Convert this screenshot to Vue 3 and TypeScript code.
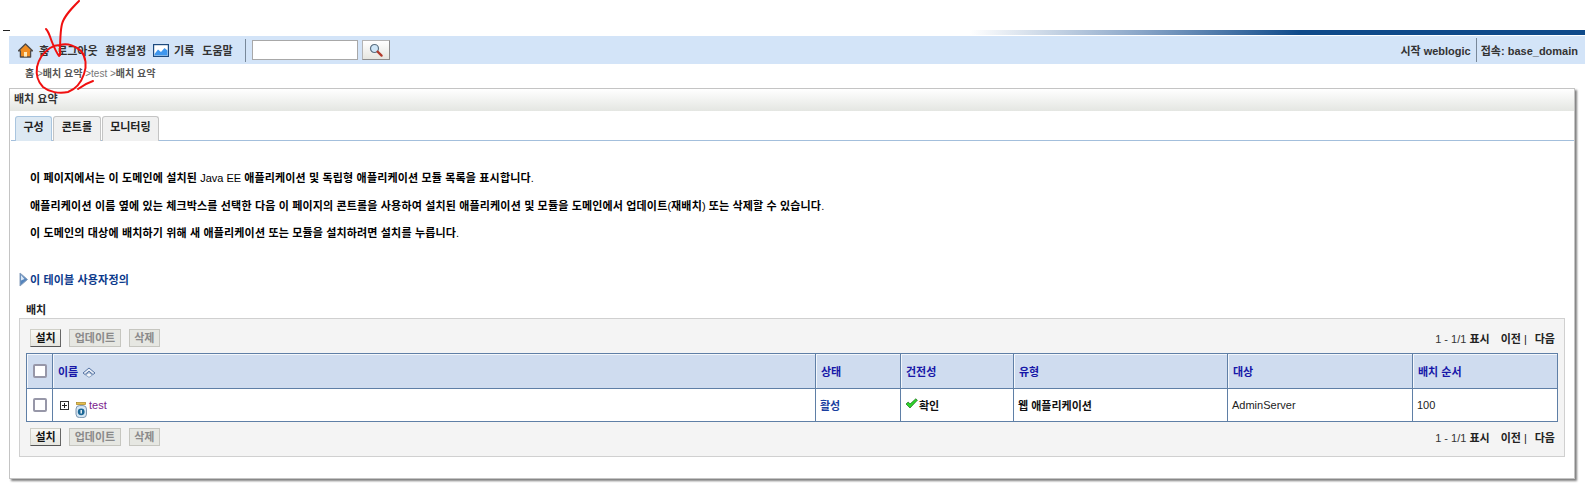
<script setup lang="ts">
const cols = [
  { w: 26, label: '' },
  { w: 763, label: '이름' },
  { w: 85, label: '상태' },
  { w: 113, label: '건전성' },
  { w: 214, label: '유형' },
  { w: 185, label: '대상' },
  { w: 145, label: '배치 순서' },
]
const tabs = ['구성', '콘트롤', '모니터링']
const toolbars = ['top', 'bottom']
</script>

<template>
  <div class="page">
    <div class="topband">
      <div class="dash"></div>
      <div class="gradbar"></div>
    </div>

    <nav class="nav">
      <svg class="ico home" width="15" height="15" viewBox="0 0 15 15">
        <path d="M7.5 1 L14.5 7.8 L12.6 7.8 L12.6 14 L2.4 14 L2.4 7.8 L0.5 7.8 Z" fill="#f08c20" stroke="#4e4a48" stroke-width="1.3" stroke-linejoin="round" />
        <rect x="6" y="9" width="3" height="4.6" fill="#ffe9b8" />
      </svg>
      <span class="nl n1">홈</span>
      <span class="nl n2">로그아웃</span>
      <span class="nl n3">환경설정</span>
      <svg class="ico chart" width="16" height="13" viewBox="0 0 16 13">
        <rect x=".6" y=".6" width="14.8" height="11.8" fill="#fff" stroke="#1d4a7e" stroke-width="1.2" />
        <path d="M1.5 10 L5 5.5 L8 8 L11.5 4 L14.5 6.5 L14.5 11.5 L1.5 11.5 Z" fill="#3f97ee" />
      </svg>
      <span class="nl n4">기록</span>
      <span class="nl n5">도움말</span>
      <span class="vsep"></span>
      <input class="search" type="text" />
      <button class="searchbtn" type="button" aria-label="검색">
        <svg width="14" height="14" viewBox="0 0 14 14">
          <circle cx="5.5" cy="5.5" r="4" fill="#cfe6f7" stroke="#5b6f80" stroke-width="1.2" />
          <path d="M8.6 8.6 L12.6 12.6" stroke="#b23a2a" stroke-width="2.2" stroke-linecap="round" />
        </svg>
      </button>
      <div class="navright">
        <span class="nr">시작 weblogic</span>
        <span class="rsep"></span>
        <span class="nr">접속: base_domain</span>
      </div>
    </nav>

    <div class="crumbs">
      <b>홈</b> <i>&gt;</i><b>배치 요약</b> <i>&gt;test &gt;</i><b>배치 요약</b>
    </div>

    <section class="panel">
      <h2 class="phead">배치 요약</h2>
      <div class="tabs">
        <div v-for="(t, i) in tabs" :key="t" class="tab" :class="{ on: i === 0 }">{{ t }}</div>
      </div>

      <div class="intro">
        <p><b>이 페이지에서는 이 도메인에 설치된</b> Java EE <b>애플리케이션 및 독립형 애플리케이션 모듈 목록을 표시합니다</b>.</p>
        <p><b>애플리케이션 이름 옆에 있는 체크박스를 선택한 다음 이 페이지의 콘트롤을 사용하여 설치된 애플리케이션 및 모듈을 도메인에서 업데이트</b>(<b>재배치</b>) <b>또는 삭제할 수 있습니다</b>.</p>
        <p><b>이 도메인의 대상에 배치하기 위해 새 애플리케이션 또는 모듈을 설치하려면 설치를 누릅니다</b>.</p>
      </div>

      <div class="customize">
        <svg width="9" height="15" viewBox="0 0 9 15">
          <path d="M1 1 L8.5 7.5 L1 14 Z" fill="#5585bd" stroke="#8aa0bc" stroke-width="1" stroke-linejoin="round" />
          <path d="M2 3 L5.5 7 L2 8.5 Z" fill="#dbe8f6" />
        </svg>
        <span>이 테이블 사용자정의</span>
      </div>

      <div class="caption">배치</div>

      <div class="box">
        <template v-for="(pos, idx) in toolbars" :key="pos">
          <div class="toolbar" :class="pos">
            <button class="btn" type="button">설치</button>
            <button class="btn off" type="button">업데이트</button>
            <button class="btn off" type="button">삭제</button>
            <div class="pager">
              <span class="count">1 - 1/1</span> <b>표시</b>
              <b class="prev">이전</b><span class="bar">|</span><b class="next">다음</b>
            </div>
          </div>

          <table v-if="idx === 0" class="grid">
            <colgroup>
              <col v-for="c in cols" :key="c.label" :style="{ width: c.w + 'px' }" />
            </colgroup>
            <thead>
              <tr>
                <th class="chk"><span class="cb"></span></th>
                <th>
                  이름
                  <svg class="sort" width="14" height="11" viewBox="0 0 14 11">
                    <path d="M1 6 L7 1 L13 6 L11 7.5 L7 4.2 L3 7.5 Z" fill="#e8eef7" stroke="#47689a" stroke-width=".9" stroke-linejoin="round" />
                    <path d="M3.5 8 L7 5.6 L10.5 8 L7 10.4 Z" fill="#f4f7fb" stroke="#6f8cb4" stroke-width=".8" stroke-linejoin="round" />
                  </svg>
                </th>
                <th v-for="c in cols.slice(2)" :key="c.label">{{ c.label }}</th>
              </tr>
            </thead>
            <tbody>
              <tr>
                <td class="chk"><span class="cb"></span></td>
                <td class="namecell">
                  <div class="nameinner">
                    <span class="plus"></span>
                    <svg class="jar" width="13" height="16" viewBox="0 0 13 16">
                      <rect x="1.6" y=".6" width="9" height="2" fill="#e6c04d" stroke="#a88420" stroke-width=".7" />
                      <rect x="1" y="3.6" width="10.5" height="12" rx="3.5" fill="#d5e6f4" stroke="#6f8ba6" stroke-width=".9" />
                      <circle cx="6.2" cy="9.8" r="3.4" fill="#1b6796" />
                      <path d="M6.2 8 L6.2 11.6" stroke="#fff" stroke-width="1.3" />
                    </svg>
                    <a class="testlink">test</a>
                  </div>
                </td>
                <td class="status">활성</td>
                <td class="health">
                  <svg width="13" height="11" viewBox="0 0 13 11">
                    <path d="M1 6 L3.2 4 L5 6 L10.8 .8 L12.4 2.2 L5 10 Z" fill="#2fd52a" stroke="#1a6a18" stroke-width=".7" stroke-linejoin="round" />
                  </svg>
                  <b>확인</b>
                </td>
                <td><b>웹 애플리케이션</b></td>
                <td>AdminServer</td>
                <td>100</td>
              </tr>
            </tbody>
          </table>
        </template>
      </div>
    </section>

    <svg class="scribble" width="110" height="100" viewBox="0 0 110 100" fill="none" stroke="#f01010" stroke-width="2" stroke-linecap="round" stroke-linejoin="round">
      <path d="M79 1 C72 8 64 16 62 24 C60 32 60 44 60 55" />
      <path d="M46 29 C49 32 50 37 52 42 C54 47 56 52 59 56 C61 55 60 50 60 46" />
      <path d="M60 45 C68 43 76 46 81 51 C86 57 87 66 84 74 C81 83 76 89 68 92 C59 94 49 92 43 87 C38 82 36 74 37 67 C39 58 44 52 50 48 C53 46 56 45 60 45" />
      <path d="M78 89 C82 86 87 83 93 81" />
    </svg>
  </div>
</template>

<style scoped>
.page {
  position: relative;
  width: 1585px;
  height: 489px;
  overflow: hidden;
  background: #fff;
  font-family: "Liberation Sans", "Noto Sans CJK KR", sans-serif;
  font-size: 11px;
  color: #000;
}

.topband {
  display: flex;
  align-items: flex-start;
  height: 36px;
  padding-top: 30px;
  box-sizing: border-box;
}
.dash { width: 7px; height: 1px; margin-left: 3px; background: #222; }
.gradbar {
  width: 615px;
  height: 5px;
  margin-left: auto;
  background: linear-gradient(to right, #ffffff 0, #8aa6c8 170px, #0f4a8a 330px, #0f4a8a 100%);
}

.nav {
  display: flex;
  align-items: center;
  height: 28px;
  margin-left: 9px;
  background: #d3e4f8;
  color: #333;
  font-weight: bold;
}
.ico { flex: none; }
.home { margin-left: 9px; }
.n1 { margin-left: 6px; }
.n2 { margin-left: 8px; }
.n3 { margin-left: 8px; }
.chart { margin-left: 7px; }
.n4 { margin-left: 5px; }
.n5 { margin-left: 8px; }
.nl { white-space: nowrap; }
.vsep { width: 1px; height: 23px; margin-left: 12px; background: #78889a; }
.search {
  width: 106px;
  height: 20px;
  margin: 0 0 0 6px;
  padding: 0;
  box-sizing: border-box;
  border: 1px solid #a8a8a8;
  background: #fff;
}
.searchbtn {
  display: flex;
  align-items: center;
  justify-content: center;
  width: 28px;
  height: 20px;
  margin-left: 4px;
  padding: 0;
  box-sizing: border-box;
  border: 1px solid #b4b4b4;
  border-bottom-color: #8c8c8c;
  border-right-color: #8c8c8c;
  background: linear-gradient(#ffffff, #e6e6e0);
}
.navright { display: flex; align-items: center; margin-left: auto; padding-right: 7px; }
.rsep { width: 1px; height: 24px; margin: 0 4px 0 5px; background: #78889a; }

.crumbs {
  height: 24px;
  padding: 3px 0 0 25px;
  box-sizing: border-box;
  font-size: 10px;
  line-height: 13px;
  color: #777;
  white-space: nowrap;
}
.crumbs b { color: #555; }
.crumbs i { font-style: normal; }

.panel {
  width: 1566px;
  height: 391px;
  margin-left: 9px;
  box-sizing: border-box;
  border: 1px solid #c4c4c4;
  box-shadow: 2px 2px 2px #808080;
  background: #fff;
}
.phead {
  height: 22px;
  margin: 0;
  padding: 3px 0 0 4px;
  box-sizing: border-box;
  font-size: 11px;
  line-height: 15px;
  color: #333;
  background: linear-gradient(#ffffff, #e4e6e2);
}
.tabs {
  display: flex;
  gap: 1px;
  height: 30px;
  padding: 5px 0 0 4px;
  margin-left: 1px;
  box-sizing: border-box;
  border-bottom: 1px solid #a3bfdc;
}
.tab {
  padding: 3px 7.5px 0;
  box-sizing: border-box;
  height: 25px;
  min-width: 35px;
  font-weight: bold;
  line-height: 14px;
  color: #222;
  text-align: center;
  background: #f0f0f0;
  border: 1px solid #c4c4c4;
  border-bottom: 0;
  border-radius: 3px 3px 0 0;
}
.tab.on { background: #dde9f3; border-color: #a9c5df; }

.intro { padding: 30px 0 0 20px; line-height: 14px; }
.intro p { margin: 0 0 13.5px; white-space: nowrap; }
.intro b { letter-spacing: .16px; }

.customize {
  display: flex;
  align-items: center;
  gap: 2px;
  margin: 32px 0 0 9px;
  height: 14px;
  color: #0b3a8c;
  font-weight: bold;
  letter-spacing: .16px;
}
.caption { margin: 17px 0 0 16px; height: 14px; line-height: 14px; font-weight: bold; color: #222; }

.box {
  margin: 1px 0 0 9px;
  width: 1546px;
  height: 139px;
  box-sizing: border-box;
  border: 1px solid #d0d0d0;
  background: #f4f4f4;
  padding: 0 7px 0 6px;
}
.toolbar { display: flex; align-items: center; height: 18px; padding-left: 4px; gap: 8px; }
.toolbar.top { margin-top: 10px; margin-bottom: 6px; }
.toolbar.bottom { margin-top: 6px; }
.btn {
  height: 18px;
  padding: 0 4.5px;
  box-sizing: border-box;
  font-family: inherit;
  font-size: 11px;
  font-weight: bold;
  line-height: 14px;
  color: #111;
  background: linear-gradient(#f8f8f4, #e6e6e0);
  border: 1px solid #d0d0c8;
  border-right-color: #666;
  border-bottom-color: #555;
}
.btn.off {
  color: #8a8a8a;
  background: #e6e7e2;
  border: 1px solid #c6c6c0;
}
.pager { margin-left: auto; padding-right: 2px; color: #222; white-space: nowrap; }
.count { color: #333; }
.prev { margin-left: 11px; }
.bar { margin: 0 8px 0 3px; font-weight: normal; }

.grid {
  width: 1532px;
  table-layout: fixed;
  border-collapse: collapse;
  border: 1px solid #5f7fa6;
  background: #fff;
}
.grid th {
  height: 35px;
  padding: 0 5px;
  box-sizing: border-box;
  border: 1px solid #5f7fa6;
  background: #cfdcef;
  box-shadow: inset 1px 1px 0 #f4f7fb;
  color: #1717a8;
  text-align: left;
  font-size: 11px;
  font-weight: bold;
  white-space: nowrap;
}
.grid td {
  height: 33px;
  padding: 0 4px;
  box-sizing: border-box;
  border: 1px solid #5f7fa6;
  color: #222;
  white-space: nowrap;
}
.grid .chk { padding: 0; text-align: center; }
.cb {
  display: inline-block;
  width: 14px;
  height: 14px;
  box-sizing: border-box;
  border: 2px solid #9797a8;
  border-radius: 2px;
  background: #fff;
  vertical-align: middle;
}
.sort { margin-left: 1px; vertical-align: -2px; }
.grid .namecell { padding: 10px 5px 0; vertical-align: top; }
.nameinner { display: flex; align-items: flex-start; height: 22px; }
.plus {
  flex: none;
  width: 9px;
  height: 9px;
  margin: 2px 0 0 2px;
  box-sizing: border-box;
  border: 1px solid #333;
  background:
    linear-gradient(#222, #222) center / 5px 1px no-repeat,
    linear-gradient(#222, #222) center / 1px 5px no-repeat,
    #fff;
}
.jar { flex: none; margin: 3px 0 0 6px; }
.testlink { margin-left: 1px; color: #7a1a8c; font-size: 11px; line-height: 13px; }
.grid .status { color: #1b3fa0; font-weight: bold; }
.health svg { vertical-align: 1px; }
.health b { margin-left: 1px; }
.grid td b { color: #111; }

.scribble { position: absolute; left: 0; top: 0; pointer-events: none; }
</style>

<style>
html, body { margin: 0; background: #fff; }
</style>
